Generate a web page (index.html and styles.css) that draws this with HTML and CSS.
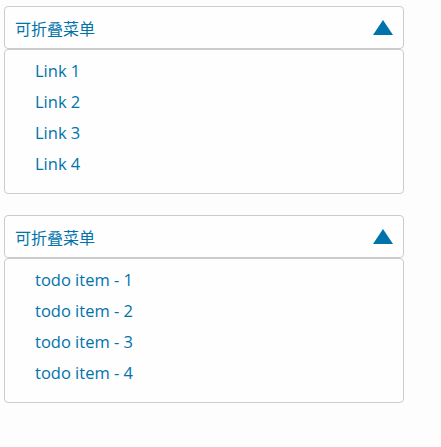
FILE: index.html
```html
<!DOCTYPE html>
<html lang="zh">
<head>
<meta charset="utf-8">
<title>可折叠菜单</title>
<link rel="stylesheet" href="styles.css">
</head>
<body>
  <div class="panel">
    <div class="panel-header">
      <span class="panel-title">可折叠菜单</span>
      <svg class="caret" width="20" height="15" viewBox="0 0 20 15"><polygon points="10,0 20,15 0,15" fill="#0073aa"/></svg>
    </div>
    <ul class="panel-body">
      <li>Link 1</li>
      <li>Link 2</li>
      <li>Link 3</li>
      <li>Link 4</li>
    </ul>
  </div>
  <div class="panel">
    <div class="panel-header">
      <span class="panel-title">可折叠菜单</span>
      <svg class="caret" width="20" height="15" viewBox="0 0 20 15"><polygon points="10,0 20,15 0,15" fill="#0073aa"/></svg>
    </div>
    <ul class="panel-body">
      <li>todo item - 1</li>
      <li>todo item - 2</li>
      <li>todo item - 3</li>
      <li>todo item - 4</li>
    </ul>
  </div>
</body>
</html>
```
FILE: styles.css
```css
html, body {
  margin: 0;
  padding: 0;
  background: #fdfdfd;
}
body {
  padding: 6px 0 0 4px;
  font-family: "Open Sans", "Noto Sans CJK SC", sans-serif;
  color: #0073aa;
}
.panel {
  width: 400px;
  margin-bottom: 21px;
}
.panel-header {
  box-sizing: border-box;
  height: 43px;
  border: 1px solid #ccc;
  border-radius: 4px;
  padding: 0 10px;
  display: flex;
  align-items: center;
  justify-content: space-between;
  background: #fefefe;
}
.panel-title {
  font-family: "Noto Sans CJK SC", sans-serif;
  font-size: 16px;
  line-height: 1;
  margin-top: 1px;
}
.caret {
  display: block;
  margin-top: -1px;
}
.panel-body {
  box-sizing: border-box;
  height: 145px;
  list-style: none;
  margin: 0;
  padding: 5px 0 14px 30px;
  border: 1px solid #ccc;
  border-radius: 4px;
  background: #fefefe;
}
.panel-body li {
  font-size: 16.5px;
  line-height: 31px;
}
```
